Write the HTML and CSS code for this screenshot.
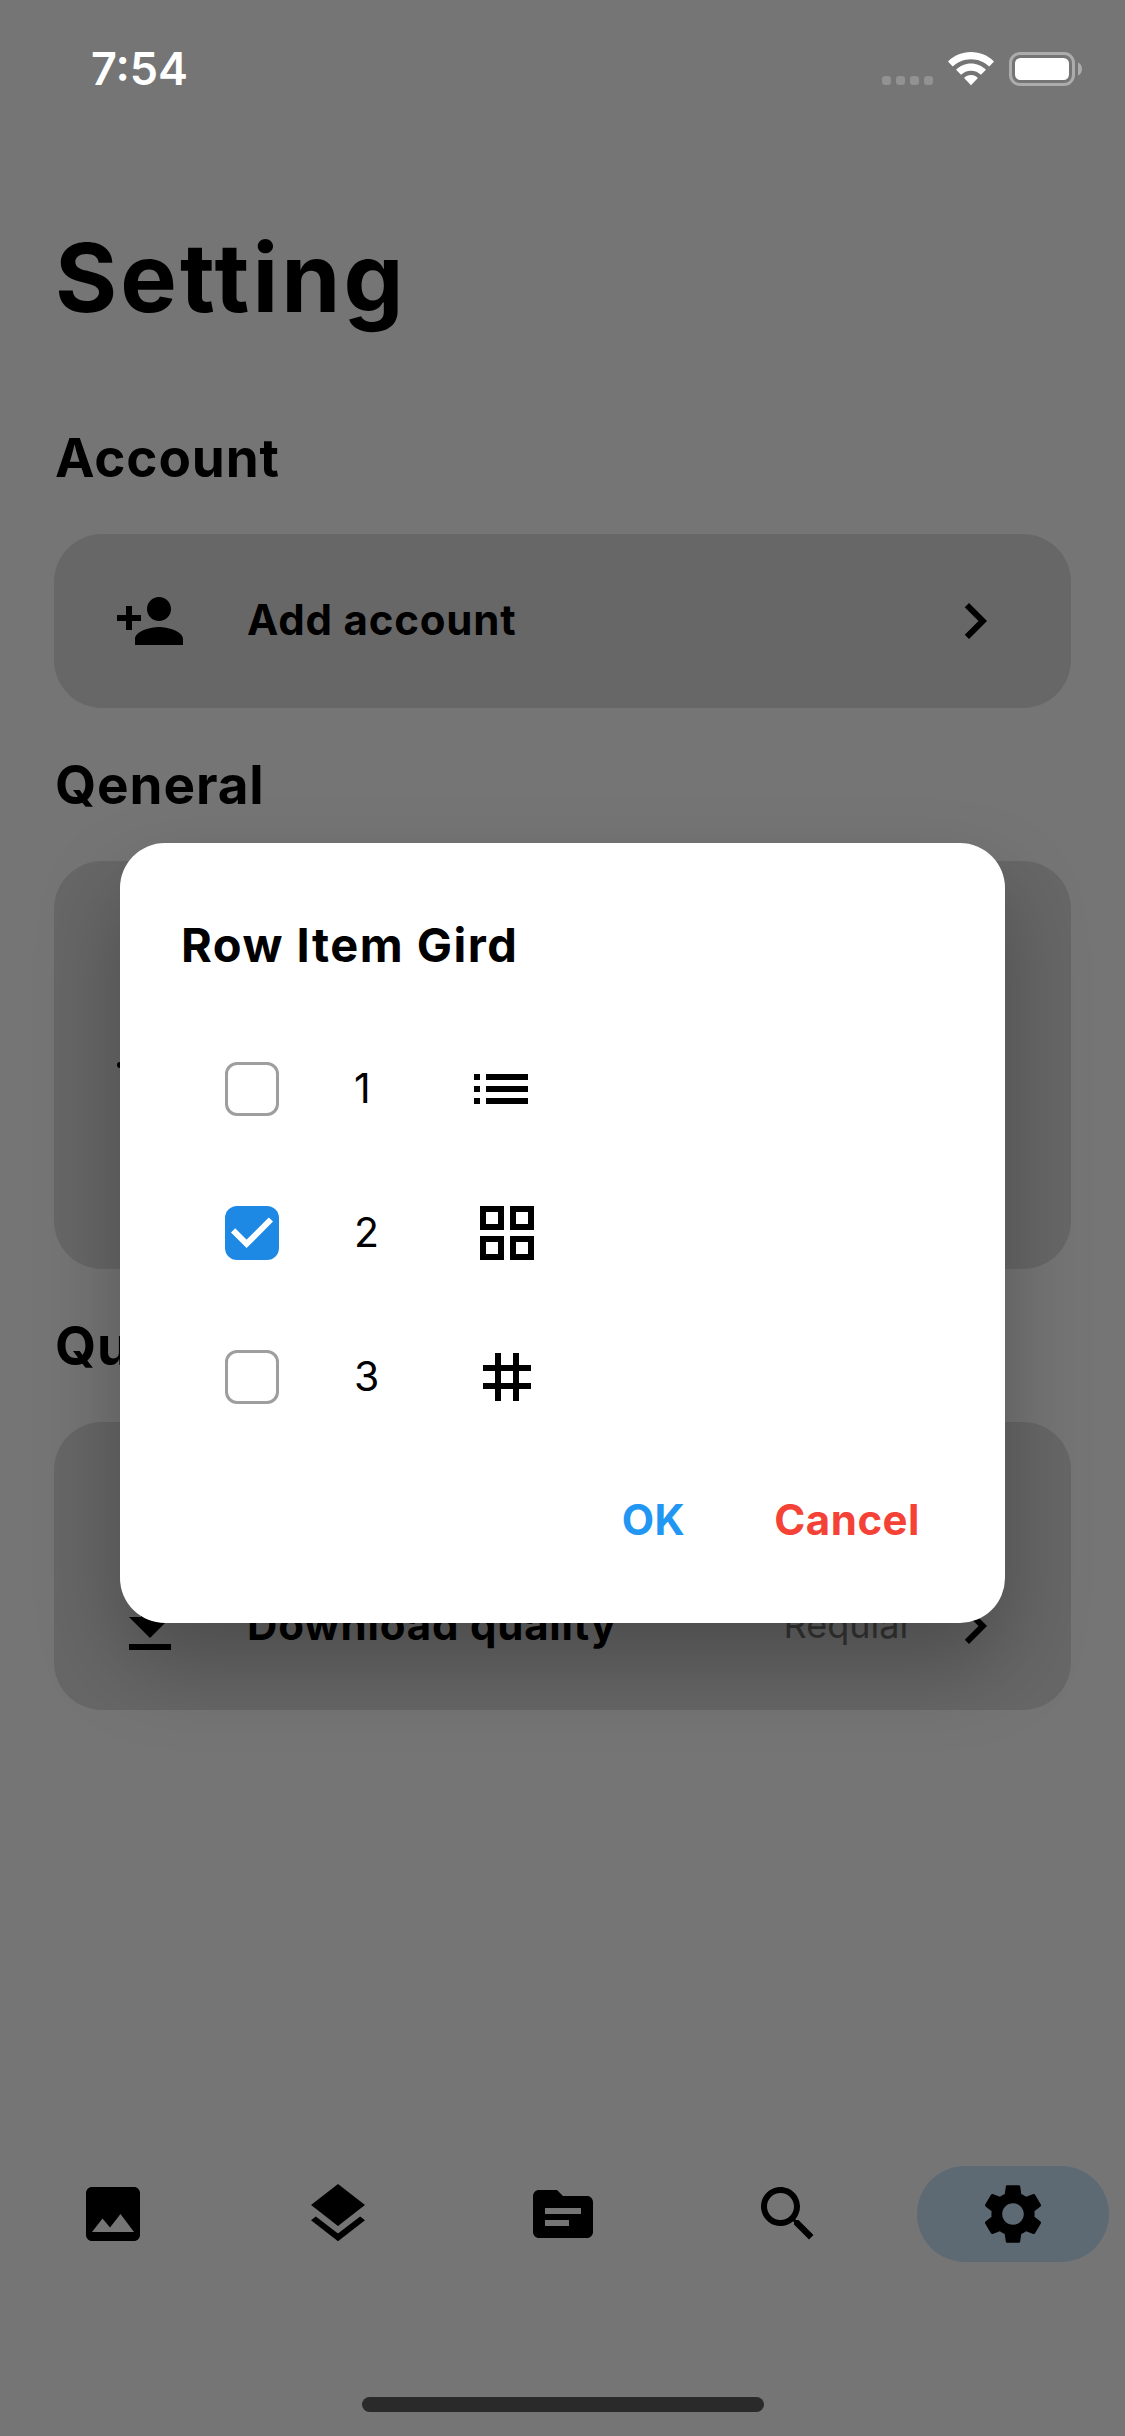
FILE: index.html
```html
<!DOCTYPE html>
<html lang="en">
<head>
<meta charset="utf-8">
<title>Setting</title>
<link rel="stylesheet" href="styles.css">
</head>
<body>
<div class="phone">
  <main class="page">
    <h1 class="title">Setting</h1>

    <h2 class="section">Account</h2>
    <div class="card card-account">
      <div class="row">
        <svg class="icon" viewBox="0 0 24 24"><path d="M15 12c2.21 0 4-1.79 4-4s-1.79-4-4-4-4 1.79-4 4 1.79 4 4 4zm-9-2V7H4v3H1v2h3v3h2v-3h3v-2H6zm9 4c-2.67 0-8 1.34-8 4v2h16v-2c0-2.66-5.33-4-8-4z"/></svg>
        <span class="label">Add account</span>
        <svg class="icon" viewBox="0 0 24 24"><path d="M10 6L8.59 7.41 13.17 12l-4.58 4.59L10 18l6-6z"/></svg>
      </div>
    </div>

    <h2 class="section">Qeneral</h2>
    <div class="card card-general">
      <div class="row">
        <svg class="icon" viewBox="0 0 24 24"><circle cx="2" cy="12" r="1"/><circle cx="12" cy="12" r="4"/><circle cx="22" cy="12" r="1"/></svg>
      </div>
    </div>

    <h2 class="section">Quality</h2>
    <div class="card card-quality">
      <div class="row">
        <svg class="icon" viewBox="0 0 24 24"><path d="M19 9h-4V3H9v6H5l7 7 7-7zM5 18v2h14v-2H5z"/></svg>
        <span class="label">Download quality</span>
        <span class="value">Reqular</span>
        <svg class="icon" viewBox="0 0 24 24"><path d="M10 6L8.59 7.41 13.17 12l-4.58 4.59L10 18l6-6z"/></svg>
      </div>
    </div>
  </main>

  <nav class="nav">
    <div class="tab"><svg class="icon" viewBox="0 0 24 24"><path d="M21 19V5c0-1.100-.9-2-2-2H5c-1.100 0-2 .9-2 2v14c0 1.100.9 2 2 2h14c1.100 0 2-.9 2-2zM8.500 13.500l2.500 3.010L14.500 12l4.500 6H5l3.500-4.500z"/></svg></div>
    <div class="tab"><svg class="icon" viewBox="0 0 24 24"><path d="M11.990 18.540l-7.370-5.730L3 14.070l9 7 9-7-1.630-1.270-7.380 5.740zM12 16l7.360-5.730L21 9l-9-7-9 7 1.630 1.270L12 16z"/></svg></div>
    <div class="tab"><svg class="icon" viewBox="0 0 24 24"><path d="M20 6h-8l-2-2H4c-1.100 0-1.990.9-1.990 2L2 18c0 1.100.9 2 2 2h16c1.100 0 2-.9 2-2V8c0-1.100-.9-2-2-2zm-6 10H6v-2h8v2zm4-4H6v-2h12v2z"/></svg></div>
    <div class="tab"><svg class="icon" viewBox="0 0 24 24"><path d="M15.500 14h-.79l-.28-.27C15.410 12.590 16 11.110 16 9.500 16 5.910 13.090 3 9.500 3S3 5.910 3 9.500 5.910 16 9.500 16c1.610 0 3.090-.59 4.230-1.570l.27.28v.79l5 4.990L20.490 19l-4.990-5zm-6 0C7.010 14 5 11.990 5 9.500S7.010 5 9.500 5 14 7.010 14 9.500 11.990 14 9.500 14z"/></svg></div>
    <div class="tab tab-active"><svg class="icon" viewBox="0 0 24 24"><path d="M19.140 12.940c.04-.3.06-.61.06-.94 0-.32-.02-.64-.07-.94l2.030-1.580c.18-.14.23-.41.12-.61l-1.920-3.320c-.12-.22-.37-.29-.59-.22l-2.390.96c-.5-.38-1.030-.7-1.620-.94l-.36-2.540c-.04-.24-.24-.41-.48-.41h-3.840c-.24 0-.43.17-.47.41l-.36 2.540c-.59.24-1.130.57-1.620.94l-2.390-.96c-.22-.08-.47 0-.59.22L2.740 8.870c-.12.21-.08.47.12.61l2.030 1.580c-.05.3-.09.63-.09.94s.02.64.07.94l-2.030 1.580c-.18.14-.23.41-.12.61l1.920 3.320c.12.22.37.29.59.22l2.390-.96c.5.38 1.030.7 1.620.94l.36 2.540c.05.24.24.41.48.41h3.840c.24 0 .44-.17.47-.41l.36-2.540c.59-.24 1.130-.56 1.620-.94l2.390.96c.22.08.47 0 .59-.22l1.920-3.320c.12-.22.07-.47-.12-.61l-2.010-1.580zM12 15.600c-1.980 0-3.600-1.620-3.600-3.600s1.620-3.600 3.600-3.600 3.600 1.620 3.600 3.600-1.620 3.600-3.600 3.600z"/></svg></div>
  </nav>

  <div class="scrim">
    <section class="dialog">
      <h3 class="dialog-title">Row Item Gird</h3>
      <div class="option">
        <span class="checkbox"></span><span class="number">1</span>
        <svg class="icon" viewBox="0 0 24 24"><path d="M3 13h2v-2H3v2zm0 4h2v-2H3v2zm0-8h2V7H3v2zm4 4h14v-2H7v2zm0 4h14v-2H7v2zM7 7v2h14V7H7z"/></svg>
      </div>
      <div class="option">
        <span class="checkbox checked"><svg class="tick" viewBox="0 0 18 18"><path d="M2.700 8.100L7.200 12.600L15.300 4.500"/></svg></span><span class="number wide">2</span>
        <svg class="icon" viewBox="0 0 24 24"><path fill-rule="evenodd" d="M3 3v8h8V3H3zm6 6H5V5h4v4zm-6 4v8h8v-8H3zm6 6H5v-4h4v4zm4-16v8h8V3h-8zm6 6h-4V5h4v4zm-6 4v8h8v-8h-8zm6 6h-4v-4h4v4z"/></svg>
      </div>
      <div class="option">
        <span class="checkbox"></span><span class="number wide">3</span>
        <svg class="icon" viewBox="0 0 24 24"><path d="M20 10V8h-4V4h-2v4h-4V4H8v4H4v2h4v4H4v2h4v4h2v-4h4v4h2v-4h4v-2h-4v-4h4zm-6 4h-4v-4h4v4z"/></svg>
      </div>
      <div class="actions">
        <span class="ok">OK</span>
        <span class="cancel">Cancel</span>
      </div>
    </section>
  </div>

  <header class="status">
    <span class="time">7:54</span>
    <div class="dots"><i></i><i></i><i></i><i></i></div>
    <svg class="wifi" viewBox="0 0 46 34">
      <path d="M23 0C32 0 40 3.500 46 9.500L41.300 14.600C36.500 9.900 30 7.200 23 7.200S9.500 9.900 4.700 14.600L0 9.500C6 3.500 14 0 23 0z"/>
      <path d="M23 11.500C28.800 11.500 34 13.900 37.900 17.700L33 22.800C30.400 20.300 26.900 18.700 23 18.700S15.600 20.300 13 22.800L8.100 17.700C12 13.900 17.200 11.500 23 11.500z"/>
      <path d="M23 23C25.800 23 28.200 24.200 29.900 26.100L23 33.300L16.100 26.100C17.800 24.200 20.200 23 23 23z"/>
    </svg>
    <svg class="battery" viewBox="0 0 74 34">
      <rect x="1.500" y="1.500" width="63" height="31" rx="9.500" fill="none" stroke="#acacac" stroke-width="3"/>
      <rect x="6" y="6" width="54" height="22" rx="5.500" fill="#fff"/>
      <path d="M69 10.500c2.500 1 4 3.600 4 6.500s-1.500 5.500-4 6.500z" fill="#acacac"/>
    </svg>
  </header>
  <div class="home-indicator"></div>
</div>
</body>
</html>
```
FILE: styles.css
```css
* {
  box-sizing: border-box;
}

body {
  margin: 0;
  font-family: Inter, "Liberation Sans", sans-serif;
  color: #000;
}

.phone {
  position: relative;
  display: flex;
  flex-direction: column;
  width: 1125px;
  height: 2436px;
  overflow: hidden;
  background: #fff;
}

h1,
h2,
h3 {
  margin: 0;
  font-weight: 700;
}

.icon {
  display: block;
  flex: none;
  width: 72px;
  height: 72px;
}

.page {
  flex: 1;
  padding: 218px 54px 0;
}

.title {
  margin: 0 0 87px 1px;
  font-size: 95px;
  line-height: 120px;
  letter-spacing: 3.100px;
}

.section {
  margin: 44px 0 43px 1px;
  font-size: 53px;
  line-height: 66px;
  letter-spacing: 0.900px;
}

.card {
  display: flex;
  flex-direction: column;
  justify-content: center;
  padding: 0 60px;
  border-radius: 48px;
  background: #e0e0e0;
}

.card-account {
  height: 174px;
}

.card-general {
  height: 408px;
}

.card-quality {
  height: 288px;
  justify-content: flex-end;
  padding-bottom: 48px;
}

.row {
  display: flex;
  align-items: center;
}

.label {
  flex: 1;
  margin-left: 61px;
  padding-bottom: 2px;
  font-size: 42px;
  line-height: 50px;
  font-weight: 700;
  letter-spacing: 0.800px;
}

.value {
  margin-right: 26px;
  padding-bottom: 2px;
  font-size: 36px;
  line-height: 50px;
  color: #757575;
}

.nav {
  display: flex;
  height: 270px;
}

.tab {
  display: flex;
  flex: none;
  align-items: center;
  justify-content: center;
  width: 192px;
  height: 96px;
  margin: 0 16.500px;
  border-radius: 48px;
}

.tab-active {
  background: #cbe6fa;
}

.scrim {
  position: absolute;
  inset: 0;
  padding: 843px 120px 0;
  background: rgba(0, 0, 0, 0.54);
}

.dialog {
  height: 780px;
  padding: 72px 60px 0;
  border-radius: 45px;
  background: #fff;
  box-shadow: 0 42px 84px rgba(0, 0, 0, 0.26);
}

.dialog-title {
  margin: 0 0 42px 1px;
  font-size: 47px;
  line-height: 60px;
  letter-spacing: 1.500px;
}

.option {
  display: flex;
  align-items: center;
  height: 144px;
  padding-left: 45px;
}

.checkbox {
  width: 54px;
  height: 54px;
  border: 3px solid #9e9e9e;
  border-radius: 12px;
}

.checked {
  border: 0;
  background: #1e88e5;
}

.tick {
  display: block;
  fill: none;
  stroke: #fff;
  stroke-width: 2;
}

.number {
  width: 111px;
  margin-left: 75px;
  padding-bottom: 2px;
  font-size: 41px;
  line-height: 50px;
}

.wide {
  width: 117px;
}

.actions {
  display: flex;
  justify-content: flex-end;
  gap: 89px;
  padding: 46px 25px 0 0;
  font-size: 42px;
  line-height: 50px;
  font-weight: 700;
  letter-spacing: 0.500px;
}

.ok {
  color: #2196f3;
}

.cancel {
  color: #f44336;
}

.status {
  position: absolute;
  top: 0;
  left: 0;
  right: 0;
  display: flex;
  height: 138px;
  padding: 0 42px 0 91px;
  align-items: center;
}

.time {
  margin-right: auto;
  font-size: 45px;
  line-height: 54px;
  font-weight: 600;
  color: #fff;
}

.dots {
  display: flex;
  gap: 5px;
  margin: 23px 15px 0 0;
}

.dots i {
  width: 9px;
  height: 9px;
  border-radius: 3px;
  background: #929292;
}

.wifi {
  width: 46px;
  height: 34px;
  margin-right: 15px;
  fill: #fff;
}

.battery {
  width: 74px;
  height: 34px;
}

.home-indicator {
  position: absolute;
  left: 362px;
  bottom: 24px;
  width: 402px;
  height: 15px;
  border-radius: 8px;
  background: #2a2a2a;
}
```
